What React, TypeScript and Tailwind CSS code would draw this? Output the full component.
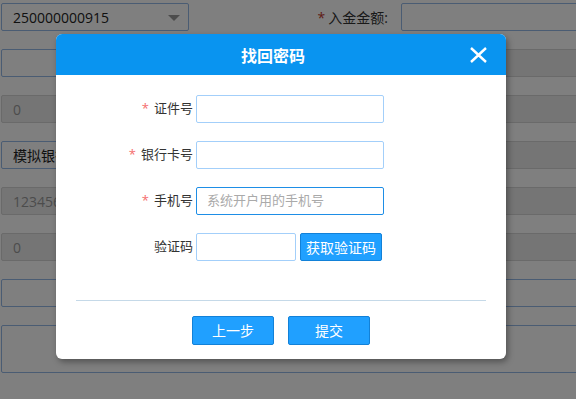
import React from "react";

const font = { fontFamily: '"Open Sans", "Noto Sans CJK SC", sans-serif' };

function BgRow({
  left,
  leftClass,
  label,
  rightClass,
  arrow,
}: {
  left: string;
  leftClass: string;
  label?: string;
  rightClass: string;
  arrow?: boolean;
}) {
  return (
    <div className="flex h-[28px] items-stretch">
      <div
        className={`relative ml-[1px] flex w-[188px] shrink-0 items-center rounded-[2px] border px-[11px] text-[14px] ${leftClass}`}
      >
        {left}
        {arrow && (
          <span className="absolute right-[8px] top-[11px] h-0 w-0 border-x-[6px] border-t-[6px] border-x-transparent border-t-[#999]" />
        )}
      </div>
      <div className="flex w-[212px] shrink-0 items-center justify-end pr-[13px] text-[14px] text-[#333]">
        {label && (
          <>
            <span className="mr-[3px] text-[#c0392b]">*</span>
            {label}
          </>
        )}
      </div>
      <div className={`w-[200px] shrink-0 rounded-[2px] border ${rightClass}`} />
    </div>
  );
}

function Field({
  label,
  required,
  children,
}: {
  label: string;
  required?: boolean;
  children: React.ReactNode;
}) {
  return (
    <div className="flex h-[28px] items-center">
      <div className="flex w-[137px] items-center justify-end text-[13px] text-[#333]">
        {required && <span className="mr-[5px] text-[#f56c6c]">*</span>}
        {label}
      </div>
      <div className="ml-[3px] flex gap-[4px]">{children}</div>
    </div>
  );
}

export default function App() {
  const enabled = "border-[#95b8e7] bg-white";
  const disabled = "border-[#d4d4d4] bg-[#ebebeb] text-[#999]";
  return (
    <div className="relative h-[399px] w-[576px] overflow-hidden bg-white" style={font}>
      {/* background page */}
      <div className="flex flex-col gap-[18px] pt-[3px]">
        <BgRow left="250000000915" leftClass={`${enabled} text-[#222]`} label="入金金额:" rightClass={enabled} arrow />
        <BgRow left="" leftClass={enabled} rightClass={disabled} />
        <BgRow left="0" leftClass={disabled} rightClass={disabled} />
        <BgRow left="模拟银行" leftClass={`${enabled} text-[#222]`} rightClass={disabled} />
        <BgRow left="123456789" leftClass={disabled} rightClass={disabled} />
        <BgRow left="0" leftClass={disabled} rightClass={disabled} />
        <div className="ml-[1px] h-[28px] w-[600px] shrink-0 rounded-[2px] border border-[#95b8e7] bg-white" />
        <div className="ml-[1px] h-[48px] w-[600px] shrink-0 rounded-[2px] border border-[#95b8e7] bg-white" />
      </div>

      {/* overlay */}
      <div className="absolute inset-0 bg-black/50" />

      {/* dialog */}
      <div className="absolute left-[56px] top-[34px] flex w-[450px] flex-col overflow-hidden rounded-[6px] bg-white shadow-[2px_3px_6px_rgba(0,0,0,0.35)]">
        <div className="relative flex h-[41px] items-center justify-center bg-[#0994f0] pr-[16px]">
          <span className="text-[16px] font-bold text-white" style={{ fontFamily: '"Noto Sans CJK SC", sans-serif' }}>
            找回密码
          </span>
          <svg
            className="absolute right-[19px] top-[13px]"
            width="17"
            height="16"
            viewBox="0 0 17 16"
            fill="none"
            stroke="white"
            strokeWidth="2.4"
          >
            <path d="M1 1L16 15M16 1L1 15" />
          </svg>
        </div>

        <div className="flex flex-col gap-[18px] pt-[20px]">
          <Field label="证件号" required>
            <div className="h-[28px] w-[188px] rounded-[2px] border border-[#a3cffa] bg-white" />
          </Field>
          <Field label="银行卡号" required>
            <div className="h-[28px] w-[188px] rounded-[2px] border border-[#a3cffa] bg-white" />
          </Field>
          <Field label="手机号" required>
            <div className="flex h-[28px] w-[188px] items-center rounded-[2px] border border-[#1e8ee6] bg-white pl-[10px] text-[13px] text-[#aaa]">
              系统开户用的手机号
            </div>
          </Field>
          <Field label="验证码">
            <div className="h-[28px] w-[100px] rounded-[2px] border border-[#a3cffa] bg-white" />
            <div className="flex h-[28px] w-[82px] items-center justify-center rounded-[2px] border border-[#1281d8] bg-[#20a0ff] text-[14px] text-white">
              获取验证码
            </div>
          </Field>
        </div>

        <div className="mx-[20px] mt-[39px] h-px bg-[#c5d9e8]" />

        <div className="mb-[14px] mt-[15px] flex justify-center gap-[14px]">
          <div className="flex h-[29px] w-[82px] items-center justify-center rounded-[2px] border border-[#1281d8] bg-[#20a0ff] text-[14px] text-white">
            上一步
          </div>
          <div className="flex h-[29px] w-[82px] items-center justify-center rounded-[2px] border border-[#1281d8] bg-[#20a0ff] text-[14px] text-white">
            提交
          </div>
        </div>
      </div>
    </div>
  );
}
